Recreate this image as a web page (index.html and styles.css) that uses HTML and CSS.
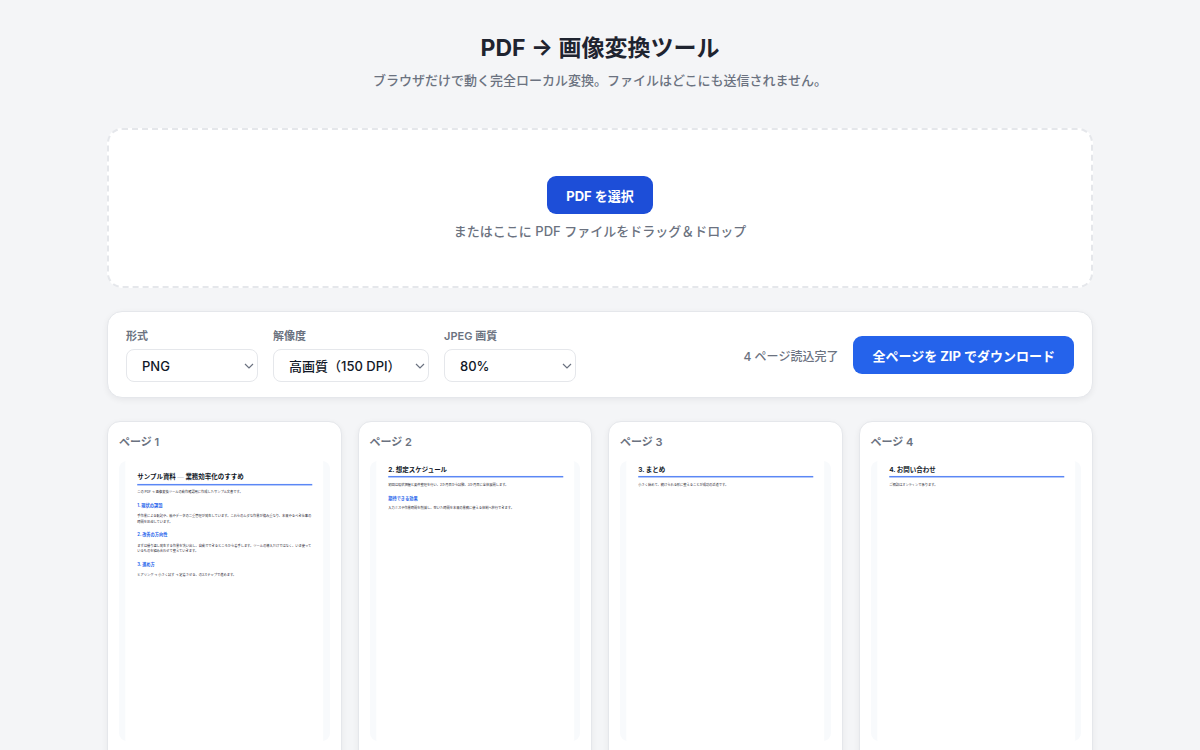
FILE: index.html
```html
<!DOCTYPE html>
<html lang="ja">
<head>
  <meta charset="UTF-8" />
  <meta name="viewport" content="width=device-width, initial-scale=1.0" />
  <title>PDF → 画像変換ツール</title>
  <link rel="stylesheet" href="styles.css">
</head>
<body>
  <div class="container">
    <header class="header">
      <h1>PDF → 画像変換ツール</h1>
      <p>ブラウザだけで動く完全ローカル変換。ファイルはどこにも送信されません。</p>
    </header>

    <main class="main">
      <section class="dropzone">
        <button type="button" class="btn btn-active">PDF を選択</button>
        <p>またはここに PDF ファイルをドラッグ＆ドロップ</p>
      </section>

      <section class="toolbar">
        <div class="field">
          <label for="format">形式</label>
          <select id="format">
            <option>PNG</option>
            <option>JPEG</option>
          </select>
        </div>
        <div class="field field-wide">
          <label for="dpi">解像度</label>
          <select id="dpi">
            <option>高画質（150 DPI）</option>
          </select>
        </div>
        <div class="field">
          <label for="quality">JPEG 画質</label>
          <select id="quality">
            <option>80%</option>
          </select>
        </div>
        <div class="actions">
          <span class="status">4 ページ読込完了</span>
          <button type="button" class="btn">全ページを ZIP でダウンロード</button>
        </div>
      </section>

      <section class="pages">
        <article class="page-card">
          <h2>ページ 1</h2>
          <svg class="preview" viewBox="0 0 794 1123">
            <rect class="sheet" width="794" height="1123"/>
            <text class="doc-title" x="48" y="73">サンプル資料 <tspan class="dash">—</tspan> 業務効率化のすすめ</text>
            <rect class="doc-rule" x="48" y="92" width="702" height="6"/>
            <text class="doc-text" x="48" y="130">この PDF → 画像変換ツールの動作確認用に作成したサンプル文書です。</text>
            <text class="doc-sub" x="48" y="185">1. 現状の課題</text>
            <text class="doc-text" x="48" y="226">手作業による転記や、紙やデータの二重管理が発生しています。これらのムダな作業が積み重なり、本来やるべき仕事の</text>
            <text class="doc-text" x="48" y="248">時間を圧迫しています。</text>
            <text class="doc-sub" x="48" y="302">2. 改善の方向性</text>
            <text class="doc-text" x="48" y="343">まずは繰り返し発生する作業を洗い出し、自動でできるところから着手します。ツールの導入だけではなく、いま使って</text>
            <text class="doc-text" x="48" y="365">いるものを組み合わせて整えていきます。</text>
            <text class="doc-sub" x="48" y="421">3. 進め方</text>
            <text class="doc-text" x="48" y="461">ヒアリング → 小さく試す → 定着させる、の3ステップで進めます。</text>
          </svg>
        </article>

        <article class="page-card">
          <h2>ページ 2</h2>
          <svg class="preview" viewBox="0 0 794 1123">
            <rect class="sheet" width="794" height="1123"/>
            <text class="doc-title" x="48" y="44">2. 想定スケジュール</text>
            <rect class="doc-rule" x="48" y="60" width="702" height="6"/>
            <text class="doc-text" x="48" y="101">初回は現状把握と要件整理を行い、2か月目から試験、3か月目に全体展開します。</text>
            <text class="doc-sub" x="48" y="156">期待できる効果</text>
            <text class="doc-text" x="48" y="194">入力ミスや作業時間を削減し、空いた時間を本来の業務に使える体制へ移行できます。</text>
          </svg>
        </article>

        <article class="page-card">
          <h2>ページ 3</h2>
          <svg class="preview" viewBox="0 0 794 1123">
            <rect class="sheet" width="794" height="1123"/>
            <text class="doc-title" x="48" y="44">3. まとめ</text>
            <rect class="doc-rule" x="48" y="60" width="702" height="6"/>
            <text class="doc-text" x="48" y="101">小さく始めて、続けられる形に整えることが成功の近道です。</text>
          </svg>
        </article>

        <article class="page-card">
          <h2>ページ 4</h2>
          <svg class="preview" viewBox="0 0 794 1123">
            <rect class="sheet" width="794" height="1123"/>
            <text class="doc-title" x="48" y="44">4. お問い合わせ</text>
            <rect class="doc-rule" x="48" y="60" width="702" height="6"/>
            <text class="doc-text" x="48" y="101">ご相談はオンラインで承ります。</text>
          </svg>
        </article>
      </section>
    </main>
  </div>
</body>
</html>
```

FILE: styles.css
```css
* {
  margin: 0;
  padding: 0;
  box-sizing: border-box;
}
body {
  background: #f4f5f7;
  color: #1f2430;
  font-family: Inter, "Noto Sans CJK JP", sans-serif;
  font-size: 13px;
}
.container {
  max-width: 1026px;
  margin: 0 auto;
  padding: 31px 20px 40px;
}
.header {
  text-align: center;
  margin-bottom: 39px;
}
.header h1 {
  font-size: 23px;
  line-height: 34px;
  font-weight: 700;
  margin-bottom: 6px;
}
.header p {
  line-height: 18px;
  font-weight: 500;
  color: #6b7280;
}
.main {
  display: flex;
  flex-direction: column;
  gap: 23px;
}

/* ドロップエリア */
.dropzone {
  display: flex;
  flex-direction: column;
  align-items: center;
  gap: 8px;
  padding: 46px 20px;
  background: #fff;
  border: 2px dashed #e5e7eb;
  border-radius: 15px;
  color: #6b7280;
}
.dropzone p {
  line-height: 18px;
  font-weight: 500;
}
.btn {
  height: 38px;
  padding: 0 19px;
  border: none;
  border-radius: 9px;
  background: #2563eb;
  color: #fff;
  font-family: inherit;
  font-size: 13px;
  font-weight: 700;
  cursor: pointer;
}
.btn:hover,
.btn-active {
  background: #1d4ed8;
}

/* 変換設定 */
.toolbar {
  display: flex;
  flex-wrap: wrap;
  align-items: center;
  gap: 15px;
  padding: 16px 18px 15px;
  background: #fff;
  border: 1px solid #e5e7eb;
  border-radius: 15px;
  box-shadow: 0 2px 6px rgba(15, 23, 42, 0.06);
}
.field {
  display: flex;
  flex-direction: column;
  gap: 5px;
  min-width: 132px;
}
.field-wide {
  min-width: 156px;
}
.field label {
  font-size: 11px;
  line-height: 16px;
  font-weight: 600;
  color: #6b7280;
}
.field select {
  appearance: none;
  height: 33px;
  padding: 0 20px 0 15px;
  border: 1px solid #e5e7eb;
  border-radius: 8px;
  background: #fff url("data:image/svg+xml,%3Csvg xmlns='http://www.w3.org/2000/svg' width='10' height='6' fill='none' stroke='%236b7280' stroke-width='1.2'%3E%3Cpath d='M1 1l4 4 4-4'/%3E%3C/svg%3E") no-repeat right 3px center;
  color: #111827;
  font-family: inherit;
  font-size: 13px;
  font-weight: 500;
}
.actions {
  display: flex;
  align-items: center;
  gap: 15px;
  margin-left: auto;
}
.status {
  font-size: 12px;
  font-weight: 500;
  color: #6b7280;
}

/* ページ一覧 */
.pages {
  display: grid;
  grid-template-columns: repeat(auto-fill, minmax(210px, 1fr));
  gap: 16px;
}
.page-card {
  padding: 12px 11px 48px;
  background: #fff;
  border: 1px solid #e5e7eb;
  border-radius: 13px;
  box-shadow: 0 2px 6px rgba(15, 23, 42, 0.06);
}
.page-card h2 {
  font-size: 11px;
  line-height: 16px;
  font-weight: 600;
  color: #6b7280;
  margin-bottom: 11px;
}
.preview {
  display: block;
  width: 100%;
  height: 280px;
  border-radius: 8px;
  background: #f8fafc;
}
.sheet {
  fill: #fff;
}
.doc-title {
  font-size: 26px;
  font-weight: 700;
  fill: #111827;
}
.dash {
  fill: #d1d5db;
}
.doc-rule {
  fill: #5b87f5;
}
.doc-sub {
  font-size: 17px;
  font-weight: 700;
  fill: #2563eb;
}
.doc-text {
  font-size: 13px;
  fill: #1f2430;
}
```
